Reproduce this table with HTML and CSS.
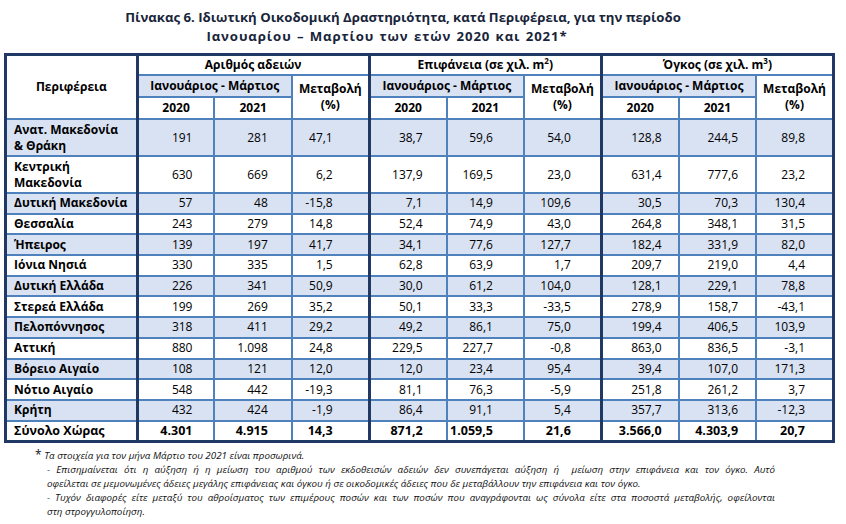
FILE: index.html
```html
<!DOCTYPE html>
<html>
  <head>
    <meta charset="UTF-8">
    <title>Πίνακας 6</title>
    <link rel="stylesheet" href="styles.css">
  </head>
  <body>
    <div class="page">
      <h1 class="title">
        <span>Πίνακας 6. Ιδιωτική Οικοδομική Δραστηριότητα, κατά Περιφέρεια, για την περίοδο</span>
        <span class="title-2">Ιανουαρίου – Μαρτίου των ετών 2020 και 2021*</span>
      </h1>

      <table class="stats">
        <colgroup>
          <col class="c-region">
          <col class="c-n"><col class="c-n"><col class="c-n">
          <col class="c-n"><col class="c-n"><col class="c-n">
          <col class="c-n"><col class="c-n"><col class="c-n">
        </colgroup>
        <thead>
          <tr class="h1">
            <th rowspan="3" class="region-head group-end">Περιφέρεια</th>
            <th colspan="3" class="group-end">Αριθμός αδειών</th>
            <th colspan="3" class="group-end">Επιφάνεια (σε χιλ. m<sup>2</sup>)</th>
            <th colspan="3">Όγκος (σε χιλ. m<sup>3</sup>)</th>
          </tr>
          <tr class="h2">
            <th colspan="2" class="period">Ιανουάριος - Μάρτιος</th>
            <th rowspan="2" class="group-end">Μεταβολή<br>(%)</th>
            <th colspan="2" class="period">Ιανουάριος - Μάρτιος</th>
            <th rowspan="2" class="group-end">Μεταβολή<br>(%)</th>
            <th colspan="2" class="period">Ιανουάριος - Μάρτιος</th>
            <th rowspan="2">Μεταβολή<br>(%)</th>
          </tr>
          <tr class="h3">
            <th>2020</th><th>2021</th>
            <th>2020</th><th>2021</th>
            <th>2020</th><th>2021</th>
          </tr>
        </thead>
        <tbody>
          <tr class="tall shaded">
            <td>Ανατ. Μακεδονία<br>&amp; Θράκη</td>
            <td>191</td><td>281</td><td>47,1</td>
            <td>38,7</td><td>59,6</td><td>54,0</td>
            <td>128,8</td><td>244,5</td><td>89,8</td>
          </tr>
          <tr class="tall">
            <td>Κεντρική<br>Μακεδονία</td>
            <td>630</td><td>669</td><td>6,2</td>
            <td>137,9</td><td>169,5</td><td>23,0</td>
            <td>631,4</td><td>777,6</td><td>23,2</td>
          </tr>
          <tr class="shaded">
            <td>Δυτική Μακεδονία</td>
            <td>57</td><td>48</td><td>-15,8</td>
            <td>7,1</td><td>14,9</td><td>109,6</td>
            <td>30,5</td><td>70,3</td><td>130,4</td>
          </tr>
          <tr>
            <td>Θεσσαλία</td>
            <td>243</td><td>279</td><td>14,8</td>
            <td>52,4</td><td>74,9</td><td>43,0</td>
            <td>264,8</td><td>348,1</td><td>31,5</td>
          </tr>
          <tr class="shaded">
            <td>Ήπειρος</td>
            <td>139</td><td>197</td><td>41,7</td>
            <td>34,1</td><td>77,6</td><td>127,7</td>
            <td>182,4</td><td>331,9</td><td>82,0</td>
          </tr>
          <tr>
            <td>Ιόνια Νησιά</td>
            <td>330</td><td>335</td><td>1,5</td>
            <td>62,8</td><td>63,9</td><td>1,7</td>
            <td>209,7</td><td>219,0</td><td>4,4</td>
          </tr>
          <tr class="shaded">
            <td>Δυτική Ελλάδα</td>
            <td>226</td><td>341</td><td>50,9</td>
            <td>30,0</td><td>61,2</td><td>104,0</td>
            <td>128,1</td><td>229,1</td><td>78,8</td>
          </tr>
          <tr>
            <td>Στερεά Ελλάδα</td>
            <td>199</td><td>269</td><td>35,2</td>
            <td>50,1</td><td>33,3</td><td>-33,5</td>
            <td>278,9</td><td>158,7</td><td>-43,1</td>
          </tr>
          <tr class="shaded">
            <td>Πελοπόννησος</td>
            <td>318</td><td>411</td><td>29,2</td>
            <td>49,2</td><td>86,1</td><td>75,0</td>
            <td>199,4</td><td>406,5</td><td>103,9</td>
          </tr>
          <tr>
            <td>Αττική</td>
            <td>880</td><td>1.098</td><td>24,8</td>
            <td>229,5</td><td>227,7</td><td>-0,8</td>
            <td>863,0</td><td>836,5</td><td>-3,1</td>
          </tr>
          <tr class="shaded">
            <td>Βόρειο Αιγαίο</td>
            <td>108</td><td>121</td><td>12,0</td>
            <td>12,0</td><td>23,4</td><td>95,4</td>
            <td>39,4</td><td>107,0</td><td>171,3</td>
          </tr>
          <tr>
            <td>Νότιο Αιγαίο</td>
            <td>548</td><td>442</td><td>-19,3</td>
            <td>81,1</td><td>76,3</td><td>-5,9</td>
            <td>251,8</td><td>261,2</td><td>3,7</td>
          </tr>
          <tr class="shaded">
            <td>Κρήτη</td>
            <td>432</td><td>424</td><td>-1,9</td>
            <td>86,4</td><td>91,1</td><td>5,4</td>
            <td>357,7</td><td>313,6</td><td>-12,3</td>
          </tr>
          <tr class="total">
            <td>Σύνολο Χώρας</td>
            <td>4.301</td><td>4.915</td><td>14,3</td>
            <td>871,2</td><td>1.059,5</td><td>21,6</td>
            <td>3.566,0</td><td>4.303,9</td><td>20,7</td>
          </tr>
        </tbody>
      </table>

      <div class="notes">
        <div class="note-first"><span class="star">*</span> Τα στοιχεία για τον μήνα Μάρτιο του 2021 είναι προσωρινά.</div>
        <div class="note-line full">- Επισημαίνεται ότι η αύξηση ή η μείωση του αριθμού των εκδοθεισών αδειών δεν συνεπάγεται αύξηση ή&nbsp; μείωση στην επιφάνεια και τον όγκο. Αυτό</div>
        <div class="note-line">οφείλεται σε μεμονωμένες άδειες μεγάλης επιφάνειας και όγκου ή σε οικοδομικές άδειες που δε μεταβάλλουν την επιφάνεια και τον όγκο.</div>
        <div class="note-line full">- Τυχόν διαφορές είτε μεταξύ του αθροίσματος των επιμέρους ποσών και των ποσών που αναγράφονται ως σύνολα είτε στα ποσοστά μεταβολής, οφείλονται</div>
        <div class="note-line">στη στρογγυλοποίηση.</div>
      </div>
    </div>
  </body>
</html>
```

FILE: styles.css
```css
/* Page */
body {
  margin: 0;
  background: #fff;
  font-family: "Open Sans", "Noto Sans", sans-serif;
  color: #000;
}

.page {
  padding: 8px 0 0 4px;
}

/* Title */
.title {
  margin: 0 0 7px 0;
  padding-right: 44px;
  font-size: 13.2px;
  font-weight: bold;
  line-height: 19px;
  text-align: center;
  color: #18243a;
}

.title span {
  display: block;
}

.title-2 {
  padding-right: 32px;
  letter-spacing: 0.9px;
  word-spacing: 1px;
}

/* Table */
.stats {
  border-collapse: collapse;
  table-layout: fixed;
  width: 831px;
  border: 3px solid #1f3864;
  font-size: 12px;
}

.c-region {
  width: 131px;
}

.c-n {
  width: 77px;
}

.stats th,
.stats td {
  border: 2px solid #4f81bd;
  padding: 0;
  line-height: 16px;
}

.stats th {
  font-weight: bold;
  background: #fff;
  text-align: center;
}

.stats sup {
  font-size: 8px;
  line-height: 0;
}

.h1 th {
  height: 18px;
}

.h2 th {
  height: 20px;
}

.h3 th {
  height: 20px;
}

.stats .period {
  background: #d9e2f3;
}

.stats .group-end,
.stats td:nth-child(1),
.stats td:nth-child(4),
.stats td:nth-child(7) {
  border-right: 3px solid #1f3864;
}

.stats td {
  height: 18.7px;
  text-align: right;
}

.stats tr.tall td {
  height: 35px;
}

.stats tr.shaded td {
  background: #d9e2f3;
}

.stats td:nth-child(1) {
  text-align: left;
  font-weight: bold;
  padding-left: 7px;
}

.stats td:nth-child(2) { padding-right: 21px; }
.stats td:nth-child(3) { padding-right: 23px; }
.stats td:nth-child(4) { padding-right: 35px; }
.stats td:nth-child(5) { padding-right: 23px; }
.stats td:nth-child(6) { padding-right: 30px; }
.stats td:nth-child(7) { padding-right: 29px; }
.stats td:nth-child(8) { padding-right: 16px; }
.stats td:nth-child(9) { padding-right: 17px; }
.stats td:nth-child(10) { padding-right: 27px; }

.stats tr.total td {
  font-weight: bold;
  font-size: 12.5px;
}

/* Notes */
.notes {
  width: 728px;
  margin: 5px 0 0 43px;
  font-size: 9.8px;
  font-style: italic;
  line-height: 14px;
  color: #111;
}

.note-first {
  margin-left: -12px;
}

.star {
  font-style: normal;
  font-size: 12px;
}

.note-line {
  text-align: left;
}

.note-line.full {
  text-align: justify;
  text-align-last: justify;
}
```
